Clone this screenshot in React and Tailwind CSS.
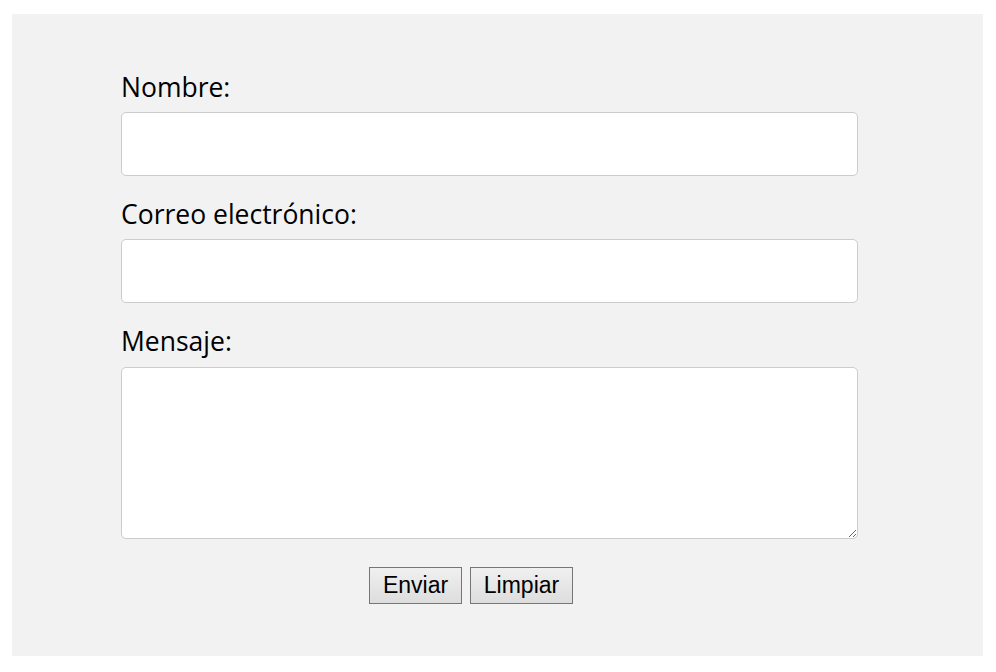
export default function App() {
  return (
    <div className="min-h-screen bg-white pt-[14px] pl-[12px]">
      <div className="w-[971px] h-[642px] bg-[#f2f2f2] pt-[57px] pl-[109px]">
        <form
          className="w-[700px] font-['Open_Sans',sans-serif] text-black"
          onSubmit={(e) => e.preventDefault()}
        >
          <label className="block text-[26.5px] leading-[32px]">Nombre:</label>
          <input
            type="text"
            className="mt-[9px] block w-[737px] h-[64px] bg-white border border-[#cccccc] rounded-[5px] px-4 outline-none"
          />

          <label className="block mt-[22px] text-[26.5px] leading-[32px]">Correo electrónico:</label>
          <input
            type="email"
            className="mt-[9px] block w-[737px] h-[64px] bg-white border border-[#cccccc] rounded-[5px] px-4 outline-none"
          />

          <label className="block mt-[22px] text-[26.5px] leading-[32px]">Mensaje:</label>
          <textarea className="mt-[10px] block w-[737px] h-[172px] bg-white border border-[#cccccc] rounded-[5px] px-4 outline-none" />

          <div className="mt-[28px] flex justify-center gap-2 font-['Liberation_Sans',Arial,sans-serif]">
            <button
              type="submit"
              className="h-[37px] w-[93px] border border-[#767676] bg-gradient-to-b from-[#f0f0f0] to-[#dddddd] text-[23px] text-black"
            >
              Enviar
            </button>
            <button
              type="reset"
              className="h-[37px] w-[103px] border border-[#767676] bg-gradient-to-b from-[#f0f0f0] to-[#dddddd] text-[23px] text-black"
            >
              Limpiar
            </button>
          </div>
        </form>
      </div>
    </div>
  );
}
